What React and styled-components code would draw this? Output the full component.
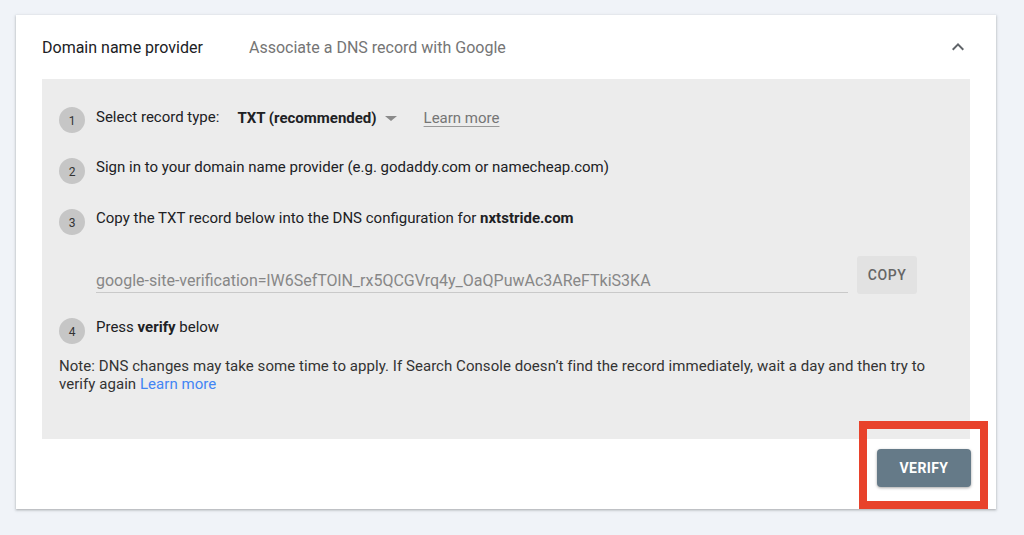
import React from "react";
import styled, { createGlobalStyle } from "styled-components";

const GlobalStyle = createGlobalStyle`
  html, body {
    margin: 0;
    padding: 0;
    background: #f0f3f8;
    font-family: Roboto, "Liberation Sans", Arial, sans-serif;
    -webkit-font-smoothing: antialiased;
  }
`;

const Page = styled.div`
  padding: 15px 28px 26px 16px;
`;

const Card = styled.section`
  position: relative;
  background: #fff;
  padding: 0 26px 22px;
  box-shadow: 0 1px 2px rgba(60, 64, 67, 0.3), 0 1px 3px 1px rgba(60, 64, 67, 0.1);
`;

const Header = styled.header`
  display: flex;
  align-items: center;
  height: 64px;
  font-size: 16px;
`;

const Title = styled.div`
  width: 207px;
  color: #202124;
`;

const Subtitle = styled.div`
  flex: 1;
  color: #757575;
`;

const Chevron = styled.svg`
  width: 24px;
  height: 24px;
  fill: #5f6368;
`;

const Panel = styled.div`
  background: #ececec;
  padding: 27px 17px 46px;
  display: flex;
  flex-direction: column;
`;

const Step = styled.div`
  display: flex;
  align-items: flex-start;
  gap: 11px;
  margin-bottom: ${(p) => p.$after}px;
  font-size: 15px;
  line-height: 20px;
  color: #202124;
`;

const Num = styled.span`
  flex: none;
  width: 26px;
  height: 26px;
  margin-top: 1px;
  border-radius: 50%;
  background: #c6c6c6;
  color: #333;
  font-size: 12px;
  display: flex;
  align-items: center;
  justify-content: center;
  padding-top: 2px;
  box-sizing: border-box;
`;

const StepText = styled.div`
  display: flex;
  align-items: center;
`;

const Select = styled.span`
  display: inline-flex;
  align-items: center;
  margin: 2px 0 0 18px;
  font-weight: 700;
  color: #202124;
`;

const Caret = styled.span`
  margin-left: 8px;
  width: 0;
  height: 0;
  border-left: 6px solid transparent;
  border-right: 6px solid transparent;
  border-top: 5px solid #8a8a8a;
`;

const MutedLink = styled.a`
  margin: 2px 0 0 27px;
  color: #757575;
  text-decoration: underline;
  text-underline-offset: 3px;
  text-decoration-color: #999;
`;

const FieldRow = styled.div`
  display: flex;
  align-items: flex-start;
  gap: 9px;
  margin: 0 36px 23px 37px;
`;

const Field = styled.div`
  flex: 1;
  height: 37px;
  box-sizing: border-box;
  padding-top: 15px;
  border-bottom: 1px solid #c9c9c9;
  font-size: 16px;
  line-height: 20px;
  color: #878787;
  white-space: nowrap;
  overflow: hidden;
`;

const CopyButton = styled.button`
  flex: none;
  width: 60px;
  height: 38px;
  border: 0;
  border-radius: 3px;
  background: #e2e2e2;
  color: #666;
  font-family: inherit;
  font-size: 14px;
  font-weight: 500;
  letter-spacing: 0.6px;
  padding: 0 0 1px;
`;

const Note = styled.p`
  margin: 13px 0 0;
  font-size: 15px;
  line-height: 18px;
  letter-spacing: 0.05px;
  color: #333;
`;

const BlueLink = styled.a`
  color: #4285f4;
  text-decoration: none;
`;

const Footer = styled.div`
  display: flex;
  justify-content: flex-end;
  padding-top: 10px;
  margin-right: -1px;
`;

const VerifyButton = styled.button`
  width: 94px;
  height: 38px;
  border: 0;
  border-radius: 4px;
  background: #657a88;
  color: #fff;
  font-family: inherit;
  font-size: 14px;
  font-weight: 700;
  letter-spacing: 0.4px;
  box-shadow: 0 1px 3px rgba(0, 0, 0, 0.35);
`;

const Highlight = styled.div`
  position: absolute;
  left: 843px;
  top: 406px;
  width: 129px;
  height: 88px;
  box-sizing: border-box;
  border: 8px solid #e8422b;
  pointer-events: none;
`;

export default function App() {
  return (
    <>
      <GlobalStyle />
      <Page>
        <Card>
          <Header>
            <Title>Domain name provider</Title>
            <Subtitle>Associate a DNS record with Google</Subtitle>
            <Chevron viewBox="0 0 24 24">
              <path d="M12 8l-6 6 1.41 1.41L12 10.83l4.59 4.58L18 14z" />
            </Chevron>
          </Header>
          <Panel>
            <Step $after={24}>
              <Num>1</Num>
              <StepText>
                Select record type:
                <Select>
                  TXT (recommended)
                  <Caret />
                </Select>
                <MutedLink href="#">Learn more</MutedLink>
              </StepText>
            </Step>
            <Step $after={24}>
              <Num>2</Num>
              <StepText>
                Sign in to your domain name provider (e.g. godaddy.com or namecheap.com)
              </StepText>
            </Step>
            <Step $after={21}>
              <Num>3</Num>
              <StepText>
                Copy the TXT record below into the DNS configuration for&nbsp;
                <b>nxtstride.com</b>
              </StepText>
            </Step>
            <FieldRow>
              <Field>google-site-verification=lW6SefTOlN_rx5QCGVrq4y_OaQPuwAc3AReFTkiS3KA</Field>
              <CopyButton>COPY</CopyButton>
            </FieldRow>
            <Step $after={0}>
              <Num>4</Num>
              <StepText>
                Press&nbsp;<b>verify</b>&nbsp;below
              </StepText>
            </Step>
            <Note>
              Note: DNS changes may take some time to apply. If Search Console doesn’t find the
              record immediately, wait a day and then try to verify again{" "}
              <BlueLink href="#">Learn more</BlueLink>
            </Note>
          </Panel>
          <Footer>
            <VerifyButton>VERIFY</VerifyButton>
          </Footer>
          <Highlight />
        </Card>
      </Page>
    </>
  );
}
